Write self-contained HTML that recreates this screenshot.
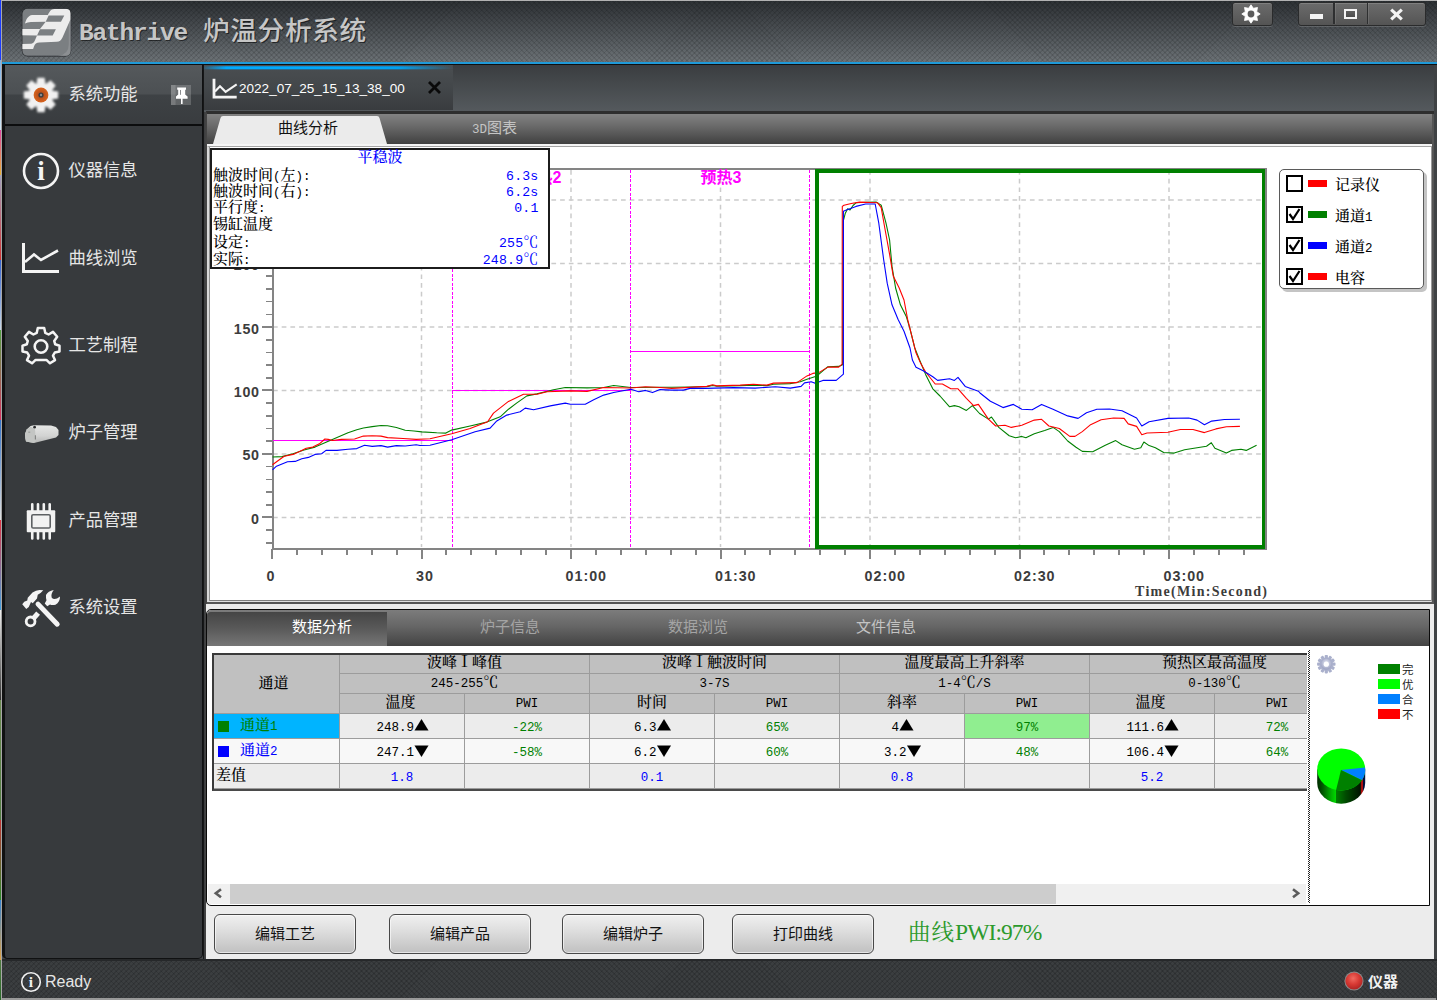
<!DOCTYPE html>
<html lang="zh-CN">
<head>
<meta charset="utf-8">
<title>Bathrive 炉温分析系统</title>
<style>
*{box-sizing:border-box;margin:0;padding:0}
html,body{width:1437px;height:1000px;overflow:hidden;background:#44474a}
body{position:relative;font-family:"Liberation Sans","Noto Sans CJK SC",sans-serif;color:#e4e4e4}
.abs{position:absolute}
.song{font-family:"Liberation Mono","Noto Serif CJK SC",serif;font-weight:500}
.hei{font-family:"Liberation Sans","Noto Sans CJK SC",sans-serif}
#strip{left:0;top:0;width:2px;border-right:1px solid #a8a8a8;height:1000px;background:linear-gradient(180deg,#1a3cff 0,#1a3cff 60px,#7fb2e8 60px,#cfe6f5 130px,#e040a0 130px,#e8b030 175px,#a0a0c0 175px,#d03030 260px,#3060d0 260px,#c8d8e8 330px,#50a040 330px,#d83060 420px,#3070c8 420px,#e0e0e0 520px,#e03040 520px,#40a0e0 610px,#f0f0f0 610px,#303030 700px,#6a8a50 700px,#507a40 820px,#c03030 820px,#2a8a2a 900px,#3080d0 900px,#e0a040 960px,#507a40 960px,#2a6a2a 1000px)}
#topline{left:2px;top:0;width:1435px;height:1px;background:#b2b2b2}
#title{left:2px;top:1px;width:1435px;height:61px;
 background:
  repeating-linear-gradient(45deg,rgba(0,0,0,.10) 0,rgba(0,0,0,.10) 1.2px,transparent 1.2px,transparent 3.54px),
  repeating-linear-gradient(-45deg,rgba(0,0,0,.10) 0,rgba(0,0,0,.10) 1.2px,transparent 1.2px,transparent 3.54px),
  linear-gradient(180deg,#2d3134 0,#3b3f43 22%,#52575b 60%,#6c7276 100%)}
#blueline{left:2px;top:62px;width:1435px;height:2px;background:#1f9ad8}
#blackline{left:2px;top:64px;width:1435px;height:1px;background:#101010}
#rborder{left:1434px;top:65px;width:3px;height:935px;background:#3f4244}
/* window buttons */
.wbtn{top:1.5px;height:24px;border:1.5px solid #2a2b2c;border-radius:3px;background:linear-gradient(180deg,#6b6b6b 0,#606060 50%,#545454 100%);box-shadow:0 1px 0 rgba(255,255,255,.16),inset 0 1px 0 rgba(255,255,255,.14)}
/* sidebar */
#side{left:2px;top:64px;width:201px;height:895px;background:#373a3d;border:1px solid #101112;border-left-width:3px;border-radius:0 0 5px 5px}
#sidehead{left:5px;top:65px;width:197px;height:61px;background:linear-gradient(180deg,#55595c 0,#4c5053 49%,#3e4245 51%,#393c3f 100%);border-bottom:2px solid #0c0d0e}
.mtxt{left:68.5px;margin-top:1px;font-size:17.3px;line-height:24px;height:24px;color:#e6e6e6;white-space:nowrap;letter-spacing:0}
/* content */
#gap{left:203px;top:65px;width:3px;height:894px;background:linear-gradient(90deg,#161718 0,#161718 30%,#3a3c3e 30%,#444 100%)}
#docbar{left:204px;top:65px;width:1230px;height:47px;background:linear-gradient(180deg,#3a3d40 0,#45494c 40%,#555a5e 100%)}
#doctab{left:204px;top:65px;width:249px;height:45px;background:linear-gradient(180deg,#4a4e51 0,#43474a 50%,#393c3f 100%)}
#docglow{left:204px;top:65.5px;width:249px;height:4.5px;background:linear-gradient(180deg,rgba(67,71,74,.5) 0,rgba(0,0,0,0) 25%,rgba(0,0,0,0) 65%,#45494c 100%),linear-gradient(90deg,rgba(0,170,255,.15) 0,#00aaff 9%,#00a8fb 55%,#00a0f0 78%,rgba(0,150,220,0) 100%)}
#content{left:206px;top:111px;width:1228px;height:848px;background:#ececec}
/* chart panel */
#cpanel{left:206px;top:111px;width:1228px;height:493px;background:#555;border-top:3px solid #2e2e2e;border-left:1px solid #444}
#ctabbar{left:207px;top:114px;width:1225px;height:30px;background:linear-gradient(180deg,#828282 0,#6a6a6a 40%,#404040 100%)}
#ctabline{left:207px;top:144px;width:1225px;height:2px;background:#f4f4f4}
#cinner{left:207px;top:146px;width:1225px;height:456px;background:#fff;border-style:solid;border-width:1px 1.5px 1px 2px;border-color:#a4a4a4 #999 #e0e0e0 #d8d8d8;box-shadow:inset 1px 0 0 #909090,inset 0 -1px 0 #808080}
/* info box */
#info{left:210px;top:148px;width:340px;height:121px;background:#fff;border:2px solid #1c1c1c;font-size:15px;line-height:16px;color:#000}
#info .r{position:absolute;left:1px;white-space:nowrap;height:16px}
#info .v{position:absolute;right:9.5px;line-height:16px;white-space:nowrap;color:#0000ff;height:16px;font-size:13.2px;letter-spacing:.2px}
/* legend */
#legend{left:1279px;top:169px;width:145px;height:120px;background:#fff;border:1px solid #5a5a5a;border-radius:5px;box-shadow:3px 3px 0 #c4c4c4;overflow:hidden}
.cb{position:absolute;left:6px;margin-top:-1px;width:17px;height:17px;border:2px solid #000;background:#fff}
.sw{position:absolute;left:28px;margin-top:-1px;width:19px;height:7px}
.lt{position:absolute;left:55px;font-size:15px;line-height:18px;margin-top:2.5px;color:#000;white-space:nowrap}
/* bottom panel */
#bpanel{left:206px;top:609px;width:1224px;height:297px;border-bottom-width:1.5px;background:#fff;border:1px solid #0a0a0a;border-radius:5px 0 0 5px}
#btabbar{left:207px;top:610px;width:1222px;height:36px;background:linear-gradient(180deg,#7c7c7c 0,#666 45%,#434343 100%);border-radius:4px 0 0 0}
#btabact{left:207px;top:612px;width:180px;height:34px;background:linear-gradient(180deg,#454545 0,#5a5a5a 50%,#767676 100%);border-radius:4px 0 0 0}
.bt{top:617px;font-size:15px;line-height:20px;color:#a4a4a4;white-space:nowrap}
/* table */
#tbl{left:212px;top:653px;width:1095px;height:138px;overflow:hidden;border-left:2px solid #3a3a3a;border-top:2px solid #3a3a3a;border-bottom:2px solid #4a4a4a;background:#fff}
.c{position:absolute;border-right:1px solid #9c9c9c;border-bottom:1px solid #9c9c9c;text-align:center;white-space:nowrap;overflow:hidden;color:#000}
.h{background:#c0c0c0;font-size:15px;line-height:19px}
.d{font-size:13px;line-height:24px;letter-spacing:.6px}
.g{color:#008000}.b{color:#0000ff}
/* buttons */
.btn{top:914px;width:142px;height:40px;border:1.5px solid #484848;border-radius:6px;background:linear-gradient(180deg,#f0f0f0 0,#dcdcdc 45%,#c0c0c0 100%);box-shadow:inset 0 0 0 1px rgba(255,255,255,.6);color:#111;font-size:15px;line-height:38px;text-align:center}
/* status */
#status{left:2px;top:959px;width:1435px;height:39px;
 background:
  repeating-linear-gradient(45deg,rgba(0,0,0,.13) 0,rgba(0,0,0,.13) 1.2px,transparent 1.2px,transparent 3.54px),
  repeating-linear-gradient(-45deg,rgba(0,0,0,.13) 0,rgba(0,0,0,.13) 1.2px,transparent 1.2px,transparent 3.54px),
  #3b3e40;border-top:2px solid #26282a}
#botline{left:2px;top:998px;width:1434px;height:2px;background:#9a9a9a}
.m{font-family:"Liberation Mono",monospace;font-size:12.5px;letter-spacing:0;line-height:0;font-weight:400}
.deg{font-family:"Noto Serif CJK SC",serif;font-size:15px;line-height:0}
.r1{background:#ececec}.r2{background:#f8f8f8}
.d{font-family:"Liberation Mono",monospace;font-size:12.5px;line-height:25px;letter-spacing:0;padding-top:2px}
.tri{font-family:"Noto Sans CJK SC","DejaVu Sans",sans-serif;font-size:15px;font-weight:normal;line-height:0;display:inline-block;width:13.5px;text-align:center;transform:scale(1,.95)}
.sq{position:absolute;left:4px;top:7px;width:11px;height:11px}
.ch{position:absolute;left:26px;top:0;font-size:15px;line-height:26px}
</style>
</head>
<body>
<div id="strip" class="abs"></div>
<div id="topline" class="abs"></div>
<div id="title" class="abs"></div>
<div id="blueline" class="abs"></div>
<div id="blackline" class="abs"></div>
<div id="rborder" class="abs"></div>

<!-- logo -->
<svg class="abs" style="left:16px;top:2px" width="64" height="60" viewBox="0 0 1067 1000">
 <rect x="97" y="102" width="822" height="806" rx="95" fill="#222528"/>
 <rect x="107" y="112" width="802" height="786" rx="85" fill="#7b7f82"/>
 <path d="M880 330 L909 290 V813 Q909 898 824 898 H700 Q880 880 880 700 Z" fill="#8c8f92"/>
 <path fill="#ececec" fill-rule="evenodd" d="M150 360 C165 290 200 225 270 215 L530 215 C560 160 580 118 640 116 L840 115 Q905 115 907 185 L907 290 L775 590 Q745 660 680 662 L390 675 Q320 680 300 740 L285 785 L107 785 L107 700 L255 695 Q300 690 320 630 L350 560 L107 555 L107 450 L400 450 L495 330 L250 332 Q190 335 150 360 Z M545 225 L805 225 L750 330 L495 330 Z M400 455 L665 455 L612 560 L350 560 Z"/>
</svg>
<div class="abs" style="left:79px;top:13px;height:34px;line-height:34px;white-space:nowrap;color:#c6c6c6;font-weight:bold;text-shadow:1px 1px 0 rgba(0,0,0,.55)"><span style="font-family:'Liberation Mono',monospace;font-size:24.5px;letter-spacing:-1.2px;position:relative;top:.5px">Bathrive </span><span style="font-family:'Liberation Sans','Noto Sans CJK SC',sans-serif;font-size:26.7px;font-weight:500;letter-spacing:.6px;position:relative;top:1px;left:2.5px">炉温分析系统</span></div>

<!-- window buttons -->
<div class="abs wbtn" style="left:1231.5px;width:41.5px"></div>
<div class="abs wbtn" style="left:1298px;width:128px"></div>
<div class="abs" style="left:1333px;top:3px;width:1.5px;height:21px;background:#2e2f30;box-shadow:1px 0 0 rgba(255,255,255,.10)"></div>
<div class="abs" style="left:1366.500px;top:3px;width:1.5px;height:21px;background:#2e2f30;box-shadow:1px 0 0 rgba(255,255,255,.10)"></div>
<svg class="abs" style="left:1239px;top:1.600px" width="24" height="24" viewBox="-12 -12 24 24"><polygon points="0.00,-9.20 2.37,-5.73 6.51,-6.51 5.73,-2.37 9.20,0.00 5.73,2.37 6.51,6.51 2.37,5.73 0.00,9.20 -2.37,5.73 -6.51,6.51 -5.73,2.37 -9.20,0.00 -5.73,-2.37 -6.51,-6.51 -2.37,-5.73" fill="#fff" stroke="#fff" stroke-width=".8" stroke-linejoin="round"/><circle r="3.400" fill="#5c5c5c"/></svg>
<div class="abs" style="left:1310px;top:14.200px;width:13px;height:4.700px;background:#f4f4f4"></div>
<div class="abs" style="left:1344px;top:9px;width:12.500px;height:10px;border:2px solid #f4f4f4;background:linear-gradient(180deg,#606060,#4c4c4c)"></div>
<svg class="abs" style="left:1389px;top:7.500px" width="15" height="13" viewBox="0 0 15 13"><path d="M2.200 1.600 L12.800 11.400 M12.800 1.600 L2.200 11.400" stroke="#f4f4f4" stroke-width="3.200" fill="none"/></svg>

<!-- sidebar -->
<div id="side" class="abs"></div>
<div id="sidehead" class="abs"></div>
<!-- gear w/ orange center -->
<svg class="abs" style="left:21px;top:75px" width="40" height="40" viewBox="-20 -20 40 40">
 <defs><radialGradient id="og" cx=".5" cy=".5" r=".5"><stop offset="0" stop-color="#5a2a10"/><stop offset=".35" stop-color="#b8501c"/><stop offset="1" stop-color="#d8641e"/></radialGradient>
 <filter id="bl" x="-20%" y="-20%" width="140%" height="140%"><feGaussianBlur stdDeviation=".8"/></filter></defs>
 <g filter="url(#bl)" fill="#f1f1f1"><circle r="12.2"/>
 <g id="gt"><path d="M-3.6 -17.2 L3.6 -17.2 L4.6 -10 L-4.6 -10 Z"/></g>
 <use href="#gt" transform="rotate(45)"/><use href="#gt" transform="rotate(90)"/><use href="#gt" transform="rotate(135)"/><use href="#gt" transform="rotate(180)"/><use href="#gt" transform="rotate(225)"/><use href="#gt" transform="rotate(270)"/><use href="#gt" transform="rotate(315)"/></g>
 <circle r="7.4" fill="url(#og)"/><circle r="2.6" fill="#3a3d40"/><circle r="1.2" fill="#8c8c8c"/>
</svg>
<div class="abs mtxt" style="top:81px">系统功能</div>
<div class="abs" style="left:171px;top:85px;width:20px;height:20px;background:linear-gradient(90deg,rgba(255,255,255,.3) 0,rgba(255,255,255,.3) 20%,rgba(255,255,255,.19) 25%,rgba(255,255,255,.19) 100%)"></div>
<svg class="abs" style="left:171px;top:85px" width="20" height="20" viewBox="0 0 20 20"><path d="M6.200 2.600 H15 V4.800 H14.200 V9.500 L16.600 11.500 V13.800 H11.600 V19 H10 V13.800 H5 V11.500 L7.200 9.500 V4.800 H6.200 Z" fill="#fff"/><rect x="9" y="5" width="1" height="4.800" fill="#8a8c8e"/></svg>

<!-- menu items -->
<svg class="abs" style="left:21px;top:151px" width="40" height="40" viewBox="-20 -20 40 40"><circle r="17" fill="none" stroke="#f4f4f4" stroke-width="2.6"/><text x="0" y="8.5" text-anchor="middle" font-family="Liberation Serif,serif" font-weight="bold" font-size="27" fill="#f4f4f4">i</text></svg>
<div class="abs mtxt" style="top:157px">仪器信息</div>

<svg class="abs" style="left:21px;top:240px" width="40" height="36" viewBox="0 0 40 36"><path d="M2.5 3 V31.5 H38" fill="none" stroke="#f4f4f4" stroke-width="3"/><path d="M4 22 L13 14.5 L20 20 L37 10.5" fill="none" stroke="#f4f4f4" stroke-width="2.6"/></svg>
<div class="abs mtxt" style="top:245px">曲线浏览</div>

<svg class="abs" style="left:21px;top:325px" width="40" height="40" viewBox="-20 -20 40 40">
 <path fill="none" stroke="#f4f4f4" stroke-width="2.5" stroke-linejoin="round" d="M-3.2 -17.5 H3.200 L4.300 -12.6 L7.600 -11.000 L12.000 -13.600 L16.200 -8.800 L13.200 -4.600 L14.200 -1.200 L18.500 0.200 V6.000 L13.800 7.000 L12.000 10.200 L14.000 14.600 L9.000 17.800 L5.400 14.400 H-5.400 L-9.000 17.800 L-14.000 14.600 L-12.000 10.200 L-13.800 7.000 L-18.500 6.000 V0.200 L-14.200 -1.200 L-13.200 -4.600 L-16.200 -8.800 L-12.000 -13.600 L-7.600 -11.000 L-4.300 -12.600 Z" transform="translate(0,0.500)"/>
 <circle r="6.300" cy="1.500" fill="none" stroke="#f4f4f4" stroke-width="2.600"/>
</svg>
<div class="abs mtxt" style="top:332px">工艺制程</div>

<svg class="abs" style="left:16px;top:408px" width="50" height="50" viewBox="0 0 1000 1000">
 <defs><linearGradient id="fg" x1="0" y1="0" x2="0" y2="1"><stop offset="0" stop-color="#e6e7e6"/><stop offset=".6" stop-color="#d2d3d2"/><stop offset="1" stop-color="#b4b5b4"/></linearGradient>
 <filter id="fb" x="-10%" y="-10%" width="120%" height="120%"><feGaussianBlur stdDeviation="9"/></filter></defs>
 <g filter="url(#fb)">
 <path d="M180 520 L215 430 L290 362 L360 345 L700 350 L800 380 L850 440 L850 540 L800 590 L400 690 L350 700 L200 670 L185 600 Z" fill="url(#fg)"/>
 <path d="M180 520 L215 430 L290 370 L380 425 L395 682 L350 700 L200 670 L185 600 Z" fill="#c3c5c3"/>
 <circle cx="372" cy="383" r="27" fill="#2a2c2e"/>
 <rect x="378" y="545" width="14" height="85" fill="#5a5c5a"/>
 <rect x="245" y="470" width="40" height="30" fill="#a4a6a4"/>
 </g>
</svg>
<div class="abs mtxt" style="top:419px">炉子管理</div>

<svg class="abs" style="left:16px;top:495px" width="50" height="50" viewBox="0 0 1000 1000">
 <g stroke="#f2f2f2" stroke-width="52" stroke-linecap="round"><path d="M325 185 V320 M440 185 V320 M556 185 V320 M674 185 V320 M325 735 V868 M440 735 V868 M556 735 V868 M674 735 V868"/></g>
 <rect x="215" y="305" width="570" height="440" rx="18" fill="#f2f2f2"/>
 <rect x="316" y="396" width="368" height="264" rx="26" fill="none" stroke="#5d6063" stroke-width="32"/>
</svg>
<div class="abs mtxt" style="top:507px">产品管理</div>

<svg class="abs" style="left:16px;top:580px" width="50" height="50" viewBox="0 0 1000 1000">
 <g fill="#f4f4f4" stroke="none">
  <path d="M125 485 L165 435 L225 410 L235 355 L330 250 Q400 205 470 200 L545 205 Q500 262 435 295 L420 370 L335 465 L300 440 L255 540 L205 580 Z"/>
  <path d="M600 300 Q640 220 755 200 Q690 280 715 355 Q770 420 880 330 Q882 440 790 495 Q720 512 680 490 L625 525 L575 470 L610 405 Q595 350 600 300 Z"/>
 </g>
 <path d="M440 482 L825 885" stroke="#f4f4f4" stroke-width="98" stroke-linecap="round"/>
 <path d="M442 662 L335 785" stroke="#f4f4f4" stroke-width="100"/>
 <circle cx="292" cy="828" r="88" fill="none" stroke="#f4f4f4" stroke-width="56"/>
</svg>
<div class="abs mtxt" style="top:594px">系统设置</div>
<!-- content -->
<div id="gap" class="abs"></div>
<div id="docbar" class="abs"></div>
<div id="content" class="abs"></div>
<div id="doctab" class="abs"></div>
<div id="docglow" class="abs"></div>
<svg class="abs" style="left:210px;top:76px" width="30" height="26" viewBox="210 76 30 26"><path d="M214 78.700 V97.200 H236.700" fill="none" stroke="#f4f4f4" stroke-width="2.800"/><path d="M215 91.500 L220 86.300 L225.600 91.800 L236.700 84.300" fill="none" stroke="#f4f4f4" stroke-width="2.100"/></svg>
<div class="abs" style="left:239px;top:80px;font-size:13.55px;line-height:18px;color:#fff;white-space:nowrap;letter-spacing:0">2022_07_25_15_13_38_00</div>
<svg class="abs" style="left:427px;top:80px" width="15" height="15" viewBox="0 0 15 15"><path d="M2 2 L13 13 M13 2 L2 13" stroke="#0a0a0a" stroke-width="2.800" fill="none"/></svg>

<div id="cpanel" class="abs"></div>
<div id="ctabbar" class="abs"></div>
<svg class="abs" style="left:208px;top:114px" width="190" height="30" viewBox="0 0 190 30"><path d="M5 30 L12.500 4 Q13 2 15 2 L169 2 Q171 2 171.500 4 L179 30 Z" fill="#ebebeb"/></svg>
<div class="abs hei" style="left:278px;top:118px;font-size:15px;line-height:20px;color:#111;white-space:nowrap">曲线分析</div>
<div class="abs hei" style="left:472px;top:117.5px;font-size:15px;line-height:20px;color:#c4c4c4;white-space:nowrap"><span style="font-family:'Liberation Mono',monospace;font-size:12.5px">3D</span>图表</div>
<div id="ctabline" class="abs"></div>
<div id="cinner" class="abs"></div>
<svg class="abs" style="left:0;top:0" width="1437" height="1000" viewBox="0 0 1437 1000">
<g stroke="#cbcbcb" stroke-width="1.5" stroke-dasharray="4.7,4" fill="none">
<path d="M273 517.4 H1265"/>
<path d="M273 453.9 H1265"/>
<path d="M273 390.4 H1265"/>
<path d="M273 327.0 H1265"/>
<path d="M273 263.5 H1265"/>
<path d="M273 200.0 H1265"/>
<path d="M421.5 170 V547"/>
<path d="M571.0 170 V547"/>
<path d="M720.5 170 V547"/>
<path d="M870.0 170 V547"/>
<path d="M1019.5 170 V547"/>
<path d="M1169.0 170 V547"/>
</g>
<g stroke="#848484" fill="none" shape-rendering="crispEdges">
<path d="M272.5 168 V549.5" stroke-width="2"/>
<path d="M271.5 548.5 H1267" stroke-width="2"/>
<path d="M272 169 H1267" stroke-width="1.6"/>
<path d="M1266.3 169 V549" stroke-width="2"/>
<path d="M266 542.8 H272" stroke-width="1.6"/>
<path d="M266 530.1 H272" stroke-width="1.6"/>
<path d="M262 517.4 H272" stroke-width="2"/>
<path d="M266 504.7 H272" stroke-width="1.6"/>
<path d="M266 492.0 H272" stroke-width="1.6"/>
<path d="M266 479.3 H272" stroke-width="1.6"/>
<path d="M266 466.6 H272" stroke-width="1.6"/>
<path d="M262 453.9 H272" stroke-width="2"/>
<path d="M266 441.2 H272" stroke-width="1.6"/>
<path d="M266 428.5 H272" stroke-width="1.6"/>
<path d="M266 415.8 H272" stroke-width="1.6"/>
<path d="M266 403.1 H272" stroke-width="1.6"/>
<path d="M262 390.4 H272" stroke-width="2"/>
<path d="M266 377.8 H272" stroke-width="1.6"/>
<path d="M266 365.1 H272" stroke-width="1.6"/>
<path d="M266 352.4 H272" stroke-width="1.6"/>
<path d="M266 339.7 H272" stroke-width="1.6"/>
<path d="M262 327.0 H272" stroke-width="2"/>
<path d="M266 314.3 H272" stroke-width="1.6"/>
<path d="M266 301.6 H272" stroke-width="1.6"/>
<path d="M266 288.9 H272" stroke-width="1.6"/>
<path d="M266 276.2 H272" stroke-width="1.6"/>
<path d="M262 263.5 H272" stroke-width="2"/>
<path d="M266 250.8 H272" stroke-width="1.6"/>
<path d="M266 238.1 H272" stroke-width="1.6"/>
<path d="M266 225.4 H272" stroke-width="1.6"/>
<path d="M266 212.7 H272" stroke-width="1.6"/>
<path d="M262 200.0 H272" stroke-width="2"/>
<path d="M266 187.3 H272" stroke-width="1.6"/>
<path d="M266 174.6 H272" stroke-width="1.6"/>
<path d="M272.0 549 V559" stroke-width="2"/>
<path d="M296.9 549 V555" stroke-width="2"/>
<path d="M321.8 549 V555" stroke-width="2"/>
<path d="M346.7 549 V555" stroke-width="2"/>
<path d="M371.7 549 V555" stroke-width="2"/>
<path d="M396.6 549 V555" stroke-width="2"/>
<path d="M421.5 549 V559" stroke-width="2"/>
<path d="M446.4 549 V555" stroke-width="2"/>
<path d="M471.3 549 V555" stroke-width="2"/>
<path d="M496.2 549 V555" stroke-width="2"/>
<path d="M521.2 549 V555" stroke-width="2"/>
<path d="M546.1 549 V555" stroke-width="2"/>
<path d="M571.0 549 V559" stroke-width="2"/>
<path d="M595.9 549 V555" stroke-width="2"/>
<path d="M620.8 549 V555" stroke-width="2"/>
<path d="M645.7 549 V555" stroke-width="2"/>
<path d="M670.7 549 V555" stroke-width="2"/>
<path d="M695.6 549 V555" stroke-width="2"/>
<path d="M720.5 549 V559" stroke-width="2"/>
<path d="M745.4 549 V555" stroke-width="2"/>
<path d="M770.3 549 V555" stroke-width="2"/>
<path d="M795.2 549 V555" stroke-width="2"/>
<path d="M820.2 549 V555" stroke-width="2"/>
<path d="M845.1 549 V555" stroke-width="2"/>
<path d="M870.0 549 V559" stroke-width="2"/>
<path d="M894.9 549 V555" stroke-width="2"/>
<path d="M919.8 549 V555" stroke-width="2"/>
<path d="M944.7 549 V555" stroke-width="2"/>
<path d="M969.7 549 V555" stroke-width="2"/>
<path d="M994.6 549 V555" stroke-width="2"/>
<path d="M1019.5 549 V559" stroke-width="2"/>
<path d="M1044.4 549 V555" stroke-width="2"/>
<path d="M1069.3 549 V555" stroke-width="2"/>
<path d="M1094.2 549 V555" stroke-width="2"/>
<path d="M1119.2 549 V555" stroke-width="2"/>
<path d="M1144.1 549 V555" stroke-width="2"/>
<path d="M1169.0 549 V559" stroke-width="2"/>
<path d="M1193.9 549 V555" stroke-width="2"/>
<path d="M1218.8 549 V555" stroke-width="2"/>
<path d="M1243.7 549 V555" stroke-width="2"/>
</g>
<g font-family="Liberation Sans,sans-serif" font-weight="bold" font-size="14.3" fill="#3c3c3c">
<text x="259.5" y="523.9" text-anchor="end" letter-spacing="0.6">0</text>
<text x="259.5" y="460.4" text-anchor="end" letter-spacing="0.6">50</text>
<text x="259.5" y="396.9" text-anchor="end" letter-spacing="0.6">100</text>
<text x="259.5" y="333.5" text-anchor="end" letter-spacing="0.6">150</text>
<text x="259.5" y="270.0" text-anchor="end" letter-spacing="0.6">200</text>
<text x="259.5" y="206.5" text-anchor="end" letter-spacing="0.6">250</text>
<text x="266.5" y="580.5" letter-spacing="1">0</text>
<text x="416.0" y="580.5" letter-spacing="1">30</text>
<text x="565.5" y="580.5" letter-spacing="1">01:00</text>
<text x="715.0" y="580.5" letter-spacing="1">01:30</text>
<text x="864.5" y="580.5" letter-spacing="1">02:00</text>
<text x="1014.0" y="580.5" letter-spacing="1">02:30</text>
<text x="1163.5" y="580.5" letter-spacing="1">03:00</text>
</g>
<text x="1267" y="595.5" text-anchor="end" font-family="Liberation Serif,serif" font-weight="bold" font-size="14" fill="#3c3c3c" textLength="132" lengthAdjust="spacing">Time(Min:Second)</text>
<g stroke="#ff00ff" stroke-width="1" fill="none" shape-rendering="crispEdges">
<path d="M452 170 V548" stroke-dasharray="3,1.5"/>
<path d="M630.5 170 V548" stroke-dasharray="3,1.5"/>
<path d="M809.5 170 V548" stroke-dasharray="3,1.5"/>
<path d="M273 440.5 H452"/><path d="M452 390.5 H630.5"/><path d="M630.5 351.5 H809.5"/>
</g>
<g font-family="Liberation Sans,Noto Sans CJK SC,sans-serif" font-weight="bold" font-size="16" fill="#ff00ff" text-anchor="middle">
<text x="362" y="183">预热1</text>
<text x="541" y="183">预热2</text>
<text x="721" y="183">预热3</text>
</g>
<polyline points="272.5,457.0 282.0,456.6 293.0,453.7 304.0,450.0 315.0,447.1 326.0,442.3 337.0,437.6 348.0,432.8 356.8,429.7 363.4,428.0 372.2,426.6 381.0,425.5 387.6,425.8 396.4,427.5 405.2,430.2 414.0,431.0 421.7,431.9 436.7,432.8 445.9,433.1 451.7,430.1 470.1,426.0 486.8,422.1 500.2,416.8 508.5,409.2 516.9,402.9 526.9,395.9 536.9,393.9 553.6,389.7 565.3,387.5 587.0,387.9 603.7,387.5 613.7,385.5 630.8,387.5 660.0,387.2 671.7,387.3 690.0,387.0 706.8,386.6 712.6,385.5 716.8,386.2 740.2,385.6 753.5,385.2 766.9,385.6 773.6,384.2 790.0,383.6 800.3,381.8 807.0,379.2 817.0,375.9 823.7,370.1 827.9,366.7 838.7,366.4 842.6,364.7 843.3,220.8 845.2,213.6 847.6,208.8 850.0,210.0 853.0,205.5 856.0,202.8 866.0,202.3 876.4,202.1 881.2,205.2 886.0,223.2 889.6,240.0 892.0,266.4 895.6,288.0 900.4,304.8 906.4,316.8 910.0,328.8 914.8,348.0 919.6,360.0 925.6,374.4 932.8,388.8 940.0,396.0 949.6,406.8 954.4,405.6 959.2,406.8 966.4,410.4 972.4,405.6 979.6,413.5 988.4,419.1 991.5,417.0 998.8,427.4 1009.2,435.8 1015.5,437.8 1021.8,436.4 1025.9,437.8 1034.3,433.7 1044.7,430.5 1053.1,427.4 1059.3,431.6 1067.7,441.0 1076.0,447.2 1082.3,451.4 1092.7,451.8 1105.3,445.2 1115.7,440.6 1122.0,444.7 1134.5,449.3 1140.8,447.7 1143.9,442.0 1149.1,445.6 1155.4,447.7 1163.7,452.5 1174.2,453.1 1184.6,449.7 1197.1,447.7 1206.5,446.2 1211.3,442.7 1214.9,448.3 1226.4,453.1 1231.6,450.4 1241.0,449.3 1246.2,450.4 1256.6,445.2" fill="none" stroke="#008000" stroke-width="1.1" stroke-linejoin="round"/>
<polyline points="272.5,464.7 277.6,461.0 284.2,456.3 293.0,454.4 299.6,451.5 306.2,448.2 312.8,447.1 319.4,443.8 324.9,439.0 328.2,439.4 332.6,440.5 341.4,439.4 354.6,439.0 363.4,436.1 372.2,435.7 381.0,436.1 387.6,437.6 403.0,438.5 416.2,439.4 425.0,439.0 430.0,438.8 451.7,433.8 470.1,428.5 487.6,421.8 493.5,413.1 508.5,401.4 523.5,394.2 536.9,394.2 546.9,391.7 570.3,390.9 587.0,391.4 603.7,387.5 630.8,388.0 645.5,386.7 660.0,387.5 671.7,388.4 706.8,386.4 712.6,384.8 716.8,385.9 740.2,385.1 753.5,384.3 766.9,385.1 773.6,383.1 797.0,382.6 807.0,375.9 812.8,373.4 818.7,372.6 827.9,367.1 838.7,367.1 842.1,364.2 842.3,206.4 844.0,205.2 851.2,203.5 859.6,202.1 877.6,202.8 881.2,207.6 884.8,228.0 889.6,254.4 893.2,276.0 899.2,288.0 904.0,300.0 907.6,319.2 912.4,338.4 916.0,352.8 920.8,363.6 925.6,372.0 930.4,378.0 935.2,384.0 942.4,384.0 950.8,388.8 958.0,388.8 966.4,398.4 973.6,405.6 978.4,404.4 988.4,419.1 995.7,426.0 1005.0,425.3 1011.3,427.4 1021.8,425.3 1034.3,420.1 1041.6,419.3 1048.9,426.0 1059.3,428.5 1069.8,436.4 1075.0,436.4 1082.3,431.6 1090.6,424.7 1101.1,419.7 1113.6,418.0 1124.1,418.4 1128.2,423.9 1136.6,426.4 1141.8,434.7 1147.0,433.0 1167.9,432.2 1180.4,429.5 1193.0,429.5 1204.4,432.6 1215.9,428.9 1226.4,426.8 1239.9,426.4" fill="none" stroke="#ff0000" stroke-width="1.1" stroke-linejoin="round"/>
<polyline points="272.5,469.8 276.5,466.2 282.0,464.0 287.5,461.8 295.2,461.4 301.8,458.8 308.4,457.4 315.0,454.4 321.6,453.7 326.0,450.4 337.0,450.4 348.0,449.3 356.8,448.6 364.5,445.3 372.2,446.4 381.0,445.6 387.6,447.1 396.4,445.6 405.2,446.0 416.2,444.7 420.0,445.5 430.0,445.2 451.7,439.8 475.1,431.8 490.1,428.1 496.8,420.9 506.8,415.1 520.2,411.8 525.2,408.1 533.6,409.7 550.3,405.9 565.3,403.1 570.3,404.2 585.3,404.2 593.7,399.7 603.7,395.1 613.7,392.5 630.8,389.2 638.8,391.7 645.5,390.4 652.5,392.6 660.0,389.6 671.7,390.1 683.4,390.1 690.1,388.4 705.1,388.4 733.5,387.6 755.2,388.1 775.3,386.8 790.3,388.1 801.1,386.4 804.5,382.9 811.2,381.8 814.5,383.1 818.7,382.1 822.9,380.4 836.2,380.4 843.4,374.2 843.4,211.2 846.4,210.0 856.0,206.4 865.6,204.0 875.2,204.0 878.8,223.2 883.6,259.2 887.2,283.2 892.0,304.8 898.0,319.2 904.0,331.2 910.0,348.0 912.4,360.0 916.0,367.2 923.2,370.8 932.8,376.8 937.6,380.4 949.6,378.7 954.4,380.4 958.0,377.3 965.2,386.4 978.4,391.2 980.0,393.0 990.4,401.3 1003.0,407.6 1013.4,404.4 1021.8,409.2 1032.2,409.7 1041.6,404.4 1053.0,409.2 1067.7,415.9 1078.1,418.4 1086.5,412.8 1096.9,409.2 1109.4,409.0 1122.0,410.7 1136.6,418.0 1141.8,426.0 1149.1,421.8 1167.9,418.4 1188.8,418.0 1197.1,420.1 1204.4,424.7 1211.7,421.1 1224.3,419.5 1239.9,419.3" fill="none" stroke="#0000ff" stroke-width="1.1" stroke-linejoin="round"/>
<rect x="816.8" y="170.8" width="446.7" height="375.9" fill="none" stroke="#008000" stroke-width="3.6" shape-rendering="crispEdges"/>
</svg>
<!-- info box -->
<div id="info" class="abs song">
 <div class="r" style="left:0;width:336px;text-align:center;top:0.75px;color:#0000ff">平稳波</div>
 <div class="r" style="top:19.25px">触波时间<span class="m">(</span>左<span class="m">):</span></div><div class="v m" style="top:19.25px">6.3s</div>
 <div class="r" style="top:35.25px">触波时间<span class="m">(</span>右<span class="m">):</span></div><div class="v m" style="top:35.25px">6.2s</div>
 <div class="r" style="top:51.25px">平行度<span class="m">:</span></div><div class="v m" style="top:51.25px">0.1</div>
 <div class="r" style="top:67.75px">锡缸温度</div>
 <div class="r" style="top:86.25px">设定<span class="m">:</span></div><div class="v m" style="top:86.25px">255<span class="deg">℃</span></div>
 <div class="r" style="top:102.75px">实际<span class="m">:</span></div><div class="v m" style="top:102.75px">248.9<span class="deg">℃</span></div>
</div>

<!-- legend -->
<div id="legend" class="abs song">
 <div class="cb" style="top:6px"></div><div class="sw" style="top:11px;background:#ff0000"></div><div class="lt" style="top:5px">记录仪</div>
 <div class="cb" style="top:37px"></div><div class="sw" style="top:42px;background:#008000"></div><div class="lt" style="top:36px">通道<span class="m">1</span></div>
 <div class="cb" style="top:68px"></div><div class="sw" style="top:73px;background:#0000ff"></div><div class="lt" style="top:67px">通道<span class="m">2</span></div>
 <div class="cb" style="top:99px"></div><div class="sw" style="top:104px;background:#ff0000"></div><div class="lt" style="top:98px">电容</div>
 <svg style="position:absolute;left:8px;top:38px" width="13" height="13" viewBox="0 0 13 13"><path d="M1.500 6 L5 11 L11.500 1" fill="none" stroke="#000" stroke-width="2.200"/></svg>
 <svg style="position:absolute;left:8px;top:69px" width="13" height="13" viewBox="0 0 13 13"><path d="M1.500 6 L5 11 L11.500 1" fill="none" stroke="#000" stroke-width="2.200"/></svg>
 <svg style="position:absolute;left:8px;top:100px" width="13" height="13" viewBox="0 0 13 13"><path d="M1.500 6 L5 11 L11.500 1" fill="none" stroke="#000" stroke-width="2.200"/></svg>
</div>

<!-- bottom panel -->
<div id="bpanel" class="abs"></div>
<div id="btabbar" class="abs"></div>
<div id="btabact" class="abs"></div>
<div class="abs bt hei" style="left:292px;color:#fff">数据分析</div>
<div class="abs bt hei" style="left:480px">炉子信息</div>
<div class="abs bt hei" style="left:668px">数据浏览</div>
<div class="abs bt hei" style="left:856px;color:#c4c4c4">文件信息</div>

<div id="tbl" class="abs song">
 <div class="c h" style="left:0;top:0;width:126px;height:59px;line-height:59px;padding-right:6px">通道</div>
 <div class="c h" style="left:126px;top:0;width:250px;height:19px;line-height:18px">波峰Ⅰ峰值</div>
 <div class="c h" style="left:376px;top:0;width:250px;height:19px;line-height:18px">波峰Ⅰ触波时间</div>
 <div class="c h" style="left:626px;top:0;width:250px;height:19px;line-height:18px">温度最高上升斜率</div>
 <div class="c h" style="left:876px;top:0;width:250px;height:19px;line-height:18px">预热区最高温度</div>
 <div class="c h" style="left:126px;top:19px;width:250px;height:20px"><span class="m">245-255</span>℃</div>
 <div class="c h" style="left:376px;top:19px;width:250px;height:20px"><span class="m">3-7S</span></div>
 <div class="c h" style="left:626px;top:19px;width:250px;height:20px"><span class="m">1-4</span>℃<span class="m">/S</span></div>
 <div class="c h" style="left:876px;top:19px;width:250px;height:20px"><span class="m">0-130</span>℃</div>
 <div class="c h" style="left:126px;top:39px;width:125px;height:20px;padding-right:3px">温度</div>
 <div class="c h" style="left:251px;top:39px;width:125px;height:20px"><span class="m">PWI</span></div>
 <div class="c h" style="left:376px;top:39px;width:125px;height:20px">时间</div>
 <div class="c h" style="left:501px;top:39px;width:125px;height:20px"><span class="m">PWI</span></div>
 <div class="c h" style="left:626px;top:39px;width:125px;height:20px">斜率</div>
 <div class="c h" style="left:751px;top:39px;width:125px;height:20px"><span class="m">PWI</span></div>
 <div class="c h" style="left:876px;top:39px;width:125px;height:20px;padding-right:3px">温度</div>
 <div class="c h" style="left:1001px;top:39px;width:125px;height:20px"><span class="m">PWI</span></div>
 <!-- row 1 -->
 <div class="c r1" style="left:0;top:59px;width:126px;height:25px;background:#00b4ff;text-align:left"><i class="sq" style="background:#008000"></i><span class="ch g">通道<span class="m">1</span></span></div>
 <div class="c d r1" style="left:126px;top:59px;width:125px;height:25px">248.9<b class="tri">▲</b></div>
 <div class="c d r1 g" style="left:251px;top:59px;width:125px;height:25px">-22%</div>
 <div class="c d r1" style="left:376px;top:59px;width:125px;height:25px">6.3<b class="tri">▲</b></div>
 <div class="c d r1 g" style="left:501px;top:59px;width:125px;height:25px">65%</div>
 <div class="c d r1" style="left:626px;top:59px;width:125px;height:25px">4<b class="tri">▲</b></div>
 <div class="c d r1 g" style="left:751px;top:59px;width:125px;height:25px;background:#90ee90">97%</div>
 <div class="c d r1" style="left:876px;top:59px;width:125px;height:25px">111.6<b class="tri">▲</b></div>
 <div class="c d r1 g" style="left:1001px;top:59px;width:125px;height:25px">72%</div>
 <!-- row 2 -->
 <div class="c r2" style="left:0;top:84px;width:126px;height:25px;text-align:left"><i class="sq" style="background:#0000ff"></i><span class="ch b">通道<span class="m">2</span></span></div>
 <div class="c d r2" style="left:126px;top:84px;width:125px;height:25px">247.1<b class="tri">▼</b></div>
 <div class="c d r2 g" style="left:251px;top:84px;width:125px;height:25px">-58%</div>
 <div class="c d r2" style="left:376px;top:84px;width:125px;height:25px">6.2<b class="tri">▼</b></div>
 <div class="c d r2 g" style="left:501px;top:84px;width:125px;height:25px">60%</div>
 <div class="c d r2" style="left:626px;top:84px;width:125px;height:25px">3.2<b class="tri">▼</b></div>
 <div class="c d r2 g" style="left:751px;top:84px;width:125px;height:25px">48%</div>
 <div class="c d r2" style="left:876px;top:84px;width:125px;height:25px">106.4<b class="tri">▼</b></div>
 <div class="c d r2 g" style="left:1001px;top:84px;width:125px;height:25px">64%</div>
 <!-- row 3 -->
 <div class="c r1" style="left:0;top:109px;width:126px;height:25px;text-align:left;font-size:15px;line-height:26px;padding-left:2px">差值</div>
 <div class="c d r1 b" style="left:126px;top:109px;width:125px;height:25px">1.8</div>
 <div class="c d r1" style="left:251px;top:109px;width:125px;height:25px"></div>
 <div class="c d r1 b" style="left:376px;top:109px;width:125px;height:25px">0.1</div>
 <div class="c d r1" style="left:501px;top:109px;width:125px;height:25px"></div>
 <div class="c d r1 b" style="left:626px;top:109px;width:125px;height:25px">0.8</div>
 <div class="c d r1" style="left:751px;top:109px;width:125px;height:25px"></div>
 <div class="c d r1 b" style="left:876px;top:109px;width:125px;height:25px">5.2</div>
 <div class="c d r1" style="left:1001px;top:109px;width:125px;height:25px"></div>
</div>

<!-- scrollbar -->
<div class="abs" style="left:208px;top:883.600px;width:1098px;height:20.600px;background:#f0f0f0"></div>
<div class="abs" style="left:230px;top:883.600px;width:826px;height:20.600px;background:#cdcdcd"></div>
<svg class="abs" style="left:213px;top:887px" width="10" height="13" viewBox="0 0 10 13"><path d="M8 2.300 L2.800 6.300 L8 10.300" fill="none" stroke="#5c5c5c" stroke-width="2.600"/></svg>
<svg class="abs" style="left:1291px;top:887px" width="10" height="13" viewBox="0 0 10 13"><path d="M2 2.300 L7.200 6.300 L2 10.300" fill="none" stroke="#5c5c5c" stroke-width="2.600"/></svg>

<!-- pie panel -->
<div class="abs" style="left:1307.500px;top:650px;width:2px;height:253px;background-image:conic-gradient(#222 90deg,#fff 90deg 180deg,#222 180deg 270deg,#fff 270deg);background-size:2px 2px"></div>
<svg class="abs" style="left:1310px;top:650px" width="120" height="250" viewBox="1310 650 120 250">
 <defs>
  <linearGradient id="cy1" x1="0" y1="0" x2="1" y2="0"><stop offset="0" stop-color="#002a00"/><stop offset=".12" stop-color="#005a00"/><stop offset=".3" stop-color="#00b400"/><stop offset=".392" stop-color="#00d800"/><stop offset=".396" stop-color="#007c00"/><stop offset=".6" stop-color="#004a00"/><stop offset=".9" stop-color="#001400"/><stop offset=".915" stop-color="#a81010"/><stop offset=".945" stop-color="#a81010"/><stop offset=".95" stop-color="#000830"/><stop offset="1" stop-color="#001448"/></linearGradient>
  <radialGradient id="gg" cx=".5" cy=".4" r=".6"><stop offset="0" stop-color="#e8eaf6"/><stop offset="1" stop-color="#9aa0c0"/></radialGradient>
 </defs>
 <!-- small gear -->
 <g transform="translate(1326.300,664.200)">
  <g fill="#aab0cc"><circle r="6.600"/><g id="sg"><rect x="-1.600" y="-9.200" width="3.200" height="18.400" rx=".8"/></g><use href="#sg" transform="rotate(30)"/><use href="#sg" transform="rotate(60)"/><use href="#sg" transform="rotate(90)"/><use href="#sg" transform="rotate(120)"/><use href="#sg" transform="rotate(150)"/></g>
  <circle r="5.400" fill="url(#gg)"/><circle r="2.600" fill="#fff"/>
 </g>
 <!-- legend -->
 <rect x="1378" y="664" width="22" height="10" fill="#008000"/>
 <rect x="1378" y="679" width="22" height="10" fill="#00ff00"/>
 <rect x="1378" y="694" width="22" height="10" fill="#0080ff"/>
 <rect x="1378" y="709" width="22" height="10" fill="#ff0000"/>
 <g font-family="Liberation Sans,Noto Sans CJK SC,sans-serif" font-size="11.500" fill="#222">
  <text x="1402" y="673.500">完</text><text x="1402" y="688.500">优</text><text x="1402" y="703.500">合</text><text x="1402" y="718.500">不</text>
 </g>
 <!-- cylinder side -->
 <path d="M1317.200 769.400 V782.700 A24 21 0 0 0 1365.200 782.700 V769.400 Z" fill="url(#cy1)"/>
 <!-- top -->
 <ellipse cx="1341.200" cy="769.400" rx="24" ry="21" fill="#00ff00"/>
 <path d="M1341 770.100 L1365.100 767.600 A24 21 0 0 1 1362 780.200 Z" fill="#0080ff"/>
 <path d="M1341 770.100 L1362 780.200 A24 21 0 0 1 1336.100 790 Z" fill="#008000"/>
</svg>

<!-- buttons -->
<div class="abs btn hei" style="left:214px">编辑工艺</div>
<div class="abs btn hei" style="left:389px">编辑产品</div>
<div class="abs btn hei" style="left:562px">编辑炉子</div>
<div class="abs btn hei" style="left:732px">打印曲线</div>
<div class="abs" style="left:908px;top:917px;font-family:'Liberation Serif','Noto Serif CJK SC',serif;font-size:22.500px;line-height:30px;color:#2c9a2c;white-space:nowrap;letter-spacing:1px">曲线<span style="letter-spacing:-.9px;font-size:23.500px">PWI:97%</span></div>

<!-- status bar -->
<div id="status" class="abs"></div>
<div id="botline" class="abs"></div>
<svg class="abs" style="left:20px;top:971px" width="22" height="22" viewBox="-11 -11 22 22"><circle r="9.300" fill="none" stroke="#f0f0f0" stroke-width="1.600"/><text x="0" y="5.200" text-anchor="middle" font-family="Liberation Serif,serif" font-weight="bold" font-size="15.500" fill="#f0f0f0">i</text></svg>
<div class="abs" style="left:45px;top:971px;font-size:16px;line-height:22px;color:#e6e6e6;white-space:nowrap">Ready</div>
<svg class="abs" style="left:1343px;top:970px" width="22" height="22" viewBox="-11 -11 22 22">
 <defs><radialGradient id="rd" cx=".45" cy=".35" r=".7"><stop offset="0" stop-color="#f06a60"/><stop offset=".5" stop-color="#d83a34"/><stop offset="1" stop-color="#a82020"/></radialGradient></defs>
 <circle r="9.600" fill="#8a8a8a"/><circle r="8.600" fill="url(#rd)"/>
</svg>
<div class="abs hei" style="left:1368px;top:971px;font-size:15px;line-height:22px;color:#f2f2f2;font-weight:bold;white-space:nowrap">仪器</div>
</body>
</html>
